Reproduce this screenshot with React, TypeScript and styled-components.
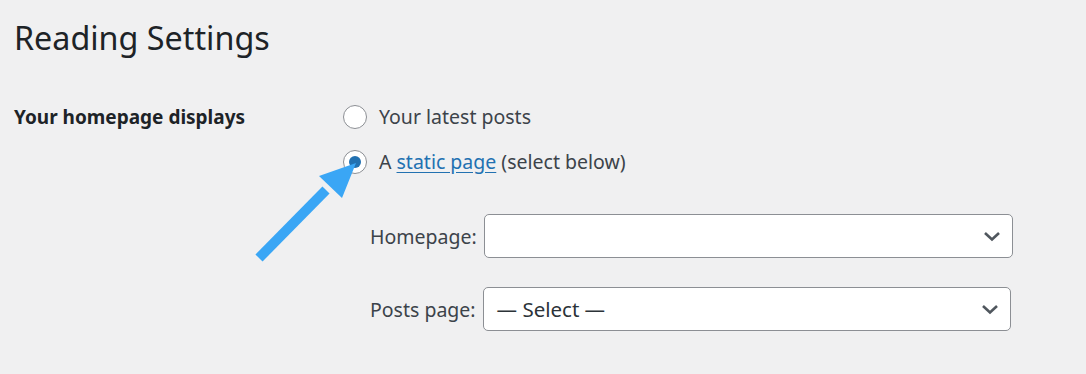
import React from "react";
import styled, { createGlobalStyle } from "styled-components";

const GlobalStyle = createGlobalStyle`
  body {
    margin: 0;
    background: #f0f0f1;
    font-family: "Noto Sans", "Open Sans", sans-serif;
    color: #1d2327;
  }
`;

const Pagina = styled.div`
  position: relative;
  padding: 14px 14px 0 14px;
  height: 374px;
  box-sizing: border-box;
`;

const Titulo = styled.h1`
  margin: 0;
  font-size: 32.3px;
  font-weight: 400;
  line-height: 46px;
  color: #1d2327;
`;

const Linha = styled.div`
  display: grid;
  grid-template-columns: 329px 1fr;
  margin-top: 40px;
`;

const Rotulo = styled.div`
  font-size: 19px;
  font-weight: 700;
  line-height: 34px;
`;

const Opcoes = styled.div`
  display: flex;
  flex-direction: column;
  gap: 11px;
`;

const OpcaoRadio = styled.label`
  display: flex;
  align-items: center;
  gap: 12px;
  font-size: 19.5px;
  line-height: 34px;
  color: #3c434a;
`;

const Radio = styled.span<{ $marcado?: boolean }>`
  width: 24px;
  height: 24px;
  flex: none;
  box-sizing: border-box;
  border-radius: 50%;
  border: 1.5px solid #8c8f94;
  background: #fff;
  display: flex;
  align-items: center;
  justify-content: center;

  &::after {
    content: "";
    width: 12px;
    height: 12px;
    border-radius: 50%;
    background: ${(p) => (p.$marcado ? "#2271b1" : "transparent")};
  }
`;

const LinkCustom = styled.a`
  color: #2271b1;
  text-decoration: underline;
  text-underline-offset: 3px;
`;

const Selecoes = styled.div`
  display: flex;
  flex-direction: column;
  gap: 29px;
  margin-top: 35px;
  padding-left: 27px;
`;

const CampoSelecao = styled.div`
  display: flex;
  align-items: center;
  gap: 7px;
  font-size: 19.5px;
  color: #3c434a;
`;

const Caixa = styled.div<{ $largura: number }>`
  width: ${(p) => p.$largura}px;
  height: 44px;
  flex: none;
  box-sizing: border-box;
  background: #fff;
  border: 1px solid #8c8f94;
  border-radius: 5px;
  display: flex;
  align-items: center;
  justify-content: space-between;
  padding: 0 11px 0 13px;
  font-size: 20.5px;
  color: #2c3338;
`;

const Seta = styled.svg`
  position: absolute;
  left: 0;
  top: 0;
  pointer-events: none;
`;

const Chevron = () => (
  <svg width="18" height="12" viewBox="0 0 18 12">
    <path d="M2 3 L9 9.5 L16 3" fill="none" stroke="#50575e" strokeWidth="2.6" />
  </svg>
);

const App = () => {
  return (
    <>
      <GlobalStyle />
      <Pagina>
        <Titulo>Reading Settings</Titulo>
        <Linha>
          <Rotulo>Your homepage displays</Rotulo>
          <div>
            <Opcoes>
              <OpcaoRadio>
                <Radio />
                Your latest posts
              </OpcaoRadio>
              <OpcaoRadio>
                <Radio $marcado />
                <span>
                  A <LinkCustom href="#">static page</LinkCustom> (select below)
                </span>
              </OpcaoRadio>
            </Opcoes>
            <Selecoes>
              <CampoSelecao>
                Homepage:
                <Caixa $largura={529}>
                  <span />
                  <Chevron />
                </Caixa>
              </CampoSelecao>
              <CampoSelecao>
                Posts page:
                <Caixa $largura={528}>
                  <span>— Select —</span>
                  <Chevron />
                </Caixa>
              </CampoSelecao>
            </Selecoes>
          </div>
        </Linha>
        <Seta width="1086" height="374">
          <line x1="259" y1="258" x2="326" y2="190" stroke="#3aa6f5" strokeWidth="10" />
          <polygon points="356,163 319,176 342,198" fill="#3aa6f5" />
        </Seta>
      </Pagina>
    </>
  );
};

export default App;
